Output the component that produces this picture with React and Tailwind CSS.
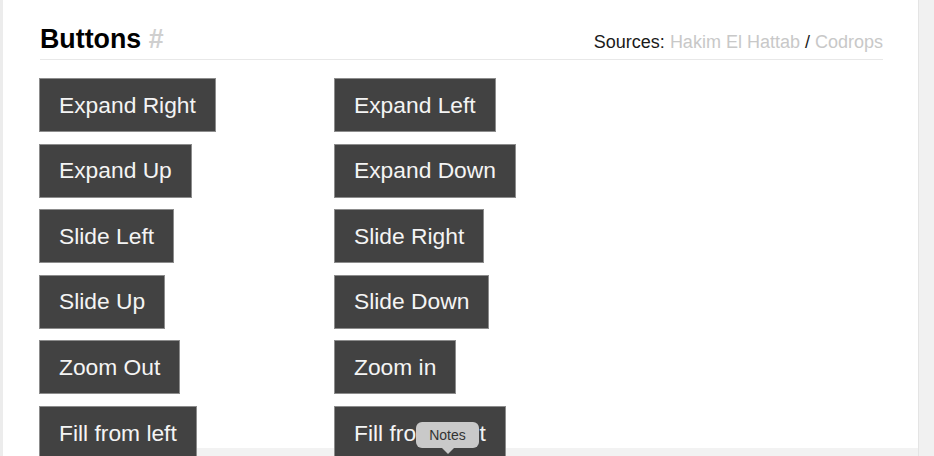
import React from 'react';

const left = ['Expand Right', 'Expand Up', 'Slide Left', 'Slide Up', 'Zoom Out', 'Fill from left'];
const right = ['Expand Left', 'Expand Down', 'Slide Right', 'Slide Down', 'Zoom in', 'Fill from right'];

const Btn = ({ label }) => (
  <div className="justify-self-start h-[54px] flex items-center px-[19px] bg-[#424242] border border-[#8c8c8c] text-[22.8px] text-[#f4f4f4] leading-none whitespace-nowrap">
    {label}
  </div>
);

export default function App() {
  const rows = left.map((l, i) => [l, right[i]]);
  return (
    <div className="flex h-[456px] w-[934px] overflow-hidden bg-white font-['Liberation_Sans',Arial,sans-serif]">
      {/* left edge */}
      <div className="w-[3px] bg-[#ececec]" />

      {/* card */}
      <div className="relative flex-1 bg-white pl-[37px] pr-[35px]">
        {/* bottom band */}
        <div className="absolute left-[194px] right-0 bottom-0 h-[8px] bg-[#f2f2f2]" />

        <div className="flex items-baseline justify-between border-b border-[#e8e8e8] pt-[24px] pb-[3px]">
          <h2 className="text-[26.8px] leading-[30px] font-bold text-black">
            Buttons <span className="text-[#cfcfcf]">#</span>
          </h2>
          <p className="text-[18px] text-[#1a1a1a]">
            Sources: <span className="text-[#c8c8c8]">Hakim El Hattab</span> /{' '}
            <span className="text-[#c8c8c8]">Codrops</span>
          </p>
        </div>

        <div className="relative mt-[18px] -ml-[1px] grid grid-cols-[295px_auto] gap-y-[11.6px]">
          {rows.map(([a, b]) => (
            <React.Fragment key={a}>
              <Btn label={a} />
              <Btn label={b} />
            </React.Fragment>
          ))}
        </div>

        {/* Notes tooltip */}
        <div className="absolute left-[413px] top-[422px] flex flex-col items-center">
          <div className="h-[26px] w-[63px] rounded-md bg-[#c9c9c9] flex items-center justify-center text-[14px] text-[#333]">
            Notes
          </div>
          <div className="h-0 w-0 border-x-[6px] border-x-transparent border-t-[6px] border-t-[#c9c9c9]" />
        </div>
      </div>

      {/* right scrollbar strip */}
      <div className="w-[16px] bg-[#f1f1f1] border-l border-[#e4e4e4]" />
    </div>
  );
}
